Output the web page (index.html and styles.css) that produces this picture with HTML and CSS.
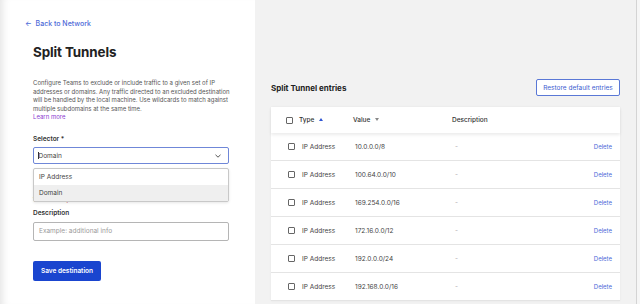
FILE: index.html
```html
<!DOCTYPE html>
<html lang="en">
<head>
  <meta charset="UTF-8" />
  <title>Split Tunnels</title>
  <link rel="stylesheet" href="styles.css">
</head>
<body>
  <div class="panel">
    <a class="back" href="#"><span class="arrow">&larr;</span> Back to Network</a>
    <h1>Split Tunnels</h1>
    <p class="intro">Configure Teams to exclude or include traffic to a given set of IP addresses or domains. Any traffic directed to an excluded destination will be handled by the local machine. Use wildcards to match against multiple subdomains at the same time.</p>
    <a class="learn" href="#">Learn more</a>

    <label class="label">Selector *</label>
    <div class="select-wrap">
      <div class="select">
        <span><span class="caret"></span>Domain</span>
        <svg width="8" height="8" viewBox="0 0 8 8"><path d="M1.5 2.8 L4 5.2 L6.5 2.8" fill="none" stroke="#444" stroke-width="0.9"/></svg>
      </div>
      <div class="menu">
        <div class="option">IP Address</div>
        <div class="option active">Domain</div>
      </div>
    </div>
    <div class="error">Value is a required field</div>

    <label class="label">Description</label>
    <div class="input">Example: additional info</div>

    <button class="save">Save destination</button>
  </div>

  <div class="main">
    <div class="section-head">
      <h2>Split Tunnel entries</h2>
      <button class="restore">Restore default entries</button>
    </div>

    <div class="card">
      <div class="thead">
        <span class="box"></span>
        <span>Type <span class="tri up"></span></span>
        <span>Value <span class="tri down"></span></span>
        <span>Description</span>
      </div>
      <div class="row"><span class="box"></span><span>IP Address</span><span>10.0.0.0/8</span><span class="dash">-</span><a href="#">Delete</a></div>
      <div class="row"><span class="box"></span><span>IP Address</span><span>100.64.0.0/10</span><span class="dash">-</span><a href="#">Delete</a></div>
      <div class="row"><span class="box"></span><span>IP Address</span><span>169.254.0.0/16</span><span class="dash">-</span><a href="#">Delete</a></div>
      <div class="row"><span class="box"></span><span>IP Address</span><span>172.16.0.0/12</span><span class="dash">-</span><a href="#">Delete</a></div>
      <div class="row"><span class="box"></span><span>IP Address</span><span>192.0.0.0/24</span><span class="dash">-</span><a href="#">Delete</a></div>
      <div class="row"><span class="box"></span><span>IP Address</span><span>192.168.0.0/16</span><span class="dash">-</span><a href="#">Delete</a></div>
    </div>
  </div>
  <div class="scroll"></div>
</body>
</html>
```

FILE: styles.css
```css
* {
  box-sizing: border-box;
}
body {
  margin: 0;
  height: 304px;
  overflow: hidden;
  display: flex;
  font-family: Inter, "Noto Sans", sans-serif;
  color: #333;
  background: #f2f2f2;
}
.panel {
  width: 255px;
  padding: 19px 26px 0 33px;
  background: #fff;
  box-shadow: inset 9px 0 8px -7px rgba(0,0,0,0.12);
  display: flex;
  flex-direction: column;
  align-items: flex-start;
}
.back {
  font-size: 7px;
  font-weight: 500;
  color: #4d6ad8;
  text-decoration: none;
  margin-left: -8px;
  line-height: 10px;
}
.back .arrow {
  margin-right: 2px;
}
h1 {
  margin: 13px 0 0;
  font-size: 13.4px;
  font-weight: 700;
  color: #222;
  letter-spacing: -0.1px;
  line-height: 20px;
}
.intro {
  margin: 17px -6px 0 0;
  font-size: 6px;
  line-height: 8.6px;
  color: #555;
}
.learn {
  font-size: 6px;
  line-height: 8px;
  color: #8a3ad0;
  text-decoration: none;
}
.label {
  margin-top: 14px;
  font-size: 6.5px;
  font-weight: 600;
  color: #333;
  line-height: 9px;
}
.select-wrap {
  position: relative;
  margin-top: 3px;
  width: 196px;
}
.select {
  height: 17px;
  border: 1px solid #6f87d8;
  border-radius: 2px;
  padding: 0 6px 0 4px;
  display: flex;
  align-items: center;
  justify-content: space-between;
  font-size: 6.5px;
  color: #444;
}
.caret {
  display: inline-block;
  width: 0.5px;
  height: 7px;
  background: #333;
  vertical-align: -1px;
}
.menu {
  position: absolute;
  left: 0;
  right: 0;
  top: 21px;
  background: #fff;
  border: 1px solid #c8c8c8;
  border-radius: 2px;
  box-shadow: 0 1px 3px rgba(0,0,0,0.1);
  z-index: 2;
}
.option {
  height: 16px;
  line-height: 16px;
  padding-left: 5px;
  font-size: 6.5px;
  color: #444;
}
.option.active {
  background: #efefef;
}
.error {
  margin-top: 33px;
  font-size: 5.5px;
  color: #c0262e;
  line-height: 7px;
}
.error + .label {
  margin-top: 5px;
}
.input {
  margin-top: 4px;
  width: 196px;
  height: 19px;
  border: 1px solid #b5b5b5;
  border-radius: 2px;
  padding-left: 5px;
  font-size: 6.5px;
  line-height: 17px;
  color: #9a9a9a;
}
.save {
  margin-top: 20px;
  width: 68px;
  height: 20px;
  border: none;
  border-radius: 2px;
  background: #1a45cf;
  color: #fff;
  font-family: inherit;
  font-size: 6.5px;
  font-weight: 600;
  padding: 0;
}
.main {
  flex: 1;
  padding: 79px 16px 0 16px;
}
.scroll {
  width: 4px;
  border-left: 1px solid #d4d4d4;
  background: #f6f6f6;
}
.section-head {
  display: flex;
  justify-content: space-between;
  align-items: center;
}
h2 {
  margin: 0;
  font-size: 8px;
  font-weight: 700;
  color: #222;
}
.restore {
  width: 84px;
  height: 17px;
  border: 1px solid #5a78d6;
  border-radius: 2px;
  background: #fff;
  color: #3c5cd0;
  font-family: inherit;
  font-size: 6.5px;
  padding: 0;
}
.card {
  margin-top: 11px;
  background: #fff;
  box-shadow: 0 0 2px rgba(0,0,0,0.06);
}
.thead {
  height: 26px;
  display: grid;
  grid-template-columns: 13px 54px 99px 1fr;
  align-items: center;
  padding-left: 15px;
  font-size: 6.5px;
  font-weight: 500;
  color: #333;
  box-shadow: 0 2px 3px rgba(0,0,0,0.08);
  position: relative;
}
.row {
  height: 28px;
  display: grid;
  grid-template-columns: 14px 53px 100px 1fr auto;
  align-items: center;
  padding: 0 8px 0 17px;
  border-bottom: 1px solid #e4e4e4;
  font-size: 6.5px;
  color: #444;
}
.box {
  width: 7px;
  height: 7px;
  border: 0.8px solid #666;
  border-radius: 1px;
}
.dash {
  color: #aaa;
}
.row a {
  color: #4d6ad8;
  text-decoration: none;
  font-size: 6px;
}
.tri {
  display: inline-block;
  width: 0;
  height: 0;
  margin-left: 3px;
  border-left: 2.5px solid transparent;
  border-right: 2.5px solid transparent;
  vertical-align: 1px;
}
.tri.up {
  border-bottom: 3px solid #2f55d4;
}
.tri.down {
  border-top: 3px solid #888;
}
```
